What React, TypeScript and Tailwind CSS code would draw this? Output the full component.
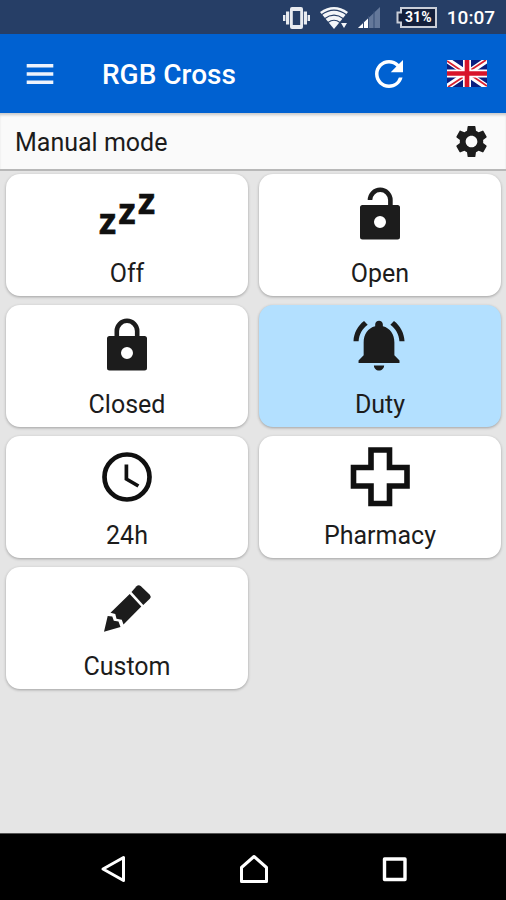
import { useState, type ReactNode } from 'react'
import { MdRefresh, MdSettings } from 'react-icons/md'

function ModeIcon({ children }: { children: ReactNode }) {
  return (
    <svg className="w-[60px] h-[60px] overflow-visible" viewBox="0 0 60 60" fill="#1c1c1c" aria-hidden="true">
      {children}
    </svg>
  )
}

const padlockBody =
  'M12.5 20h35a2.5 2.5 0 0 1 2.5 2.5v29.500a2.500 2.500 0 0 1-2.500 2.500h-35a2.500 2.500 0 0 1-2.500-2.500V22.500A2.500 2.500 0 0 1 12.500 20zM30 31a6 6 0 1 0 0 12a6 6 0 0 0 0-12z'

const modes = [
  {
    id: 'off',
    label: 'Off',
    icon: (
      <g
        className="font-['Open_Sans',sans-serif] font-bold text-[35px]"
        fill="#101010"
        stroke="#101010"
        strokeWidth=".7"
        textAnchor="middle"
      >
        <text x="10.500" y="49">z</text>
        <text x="30" y="39">z</text>
        <text x="49.500" y="29">z</text>
      </g>
    ),
  },
  {
    id: 'open',
    label: 'Open',
    icon: (
      <>
        <path d={padlockBody} fillRule="evenodd" />
        <path d="M20 15a10.200 10.200 0 0 1 20.400 0v6" fill="none" stroke="#1c1c1c" strokeWidth="4.600" />
      </>
    ),
  },
  {
    id: 'closed',
    label: 'Closed',
    icon: (
      <>
        <path d={padlockBody} fillRule="evenodd" />
        <path d="M19.800 21v-6a10.200 10.200 0 0 1 20.400 0v6" fill="none" stroke="#1c1c1c" strokeWidth="4.600" />
      </>
    ),
  },
  {
    id: 'duty',
    label: 'Duty',
    icon: (
      <path
        transform="translate(-1.7 -1.7) scale(2.56)"
        d="M7.580 4.080 6.150 2.650C3.750 4.480 2.170 7.300 2.030 10.500h2c.15-2.65 1.51-4.97 3.55-6.42zm12.390 6.420h2c-.15-3.2-1.73-6.02-4.12-7.85l-1.42 1.430c2.020 1.450 3.390 3.770 3.540 6.420zM18 11c0-3.070-1.640-5.640-4.500-6.320V4c0-.83-.67-1.5-1.5-1.5s-1.500.67-1.500 1.500v.68C7.630 5.360 6 7.920 6 11v5l-2 2v1h16v-1l-2-2v-5zm-6 11c1.100 0 2-.9 2-2h-4c0 1.100.9 2 2 2z"
      />
    ),
  },
  {
    id: '24h',
    label: '24h',
    icon: (
      <g fill="none" stroke="#101010">
        <circle cx="30" cy="30" r="22.500" strokeWidth="4.700" />
        <path d="M29.400 17.500V32l12 7" strokeWidth="3.700" />
      </g>
    ),
  },
  {
    id: 'pharmacy',
    label: 'Pharmacy',
    icon: (
      <path
        d="M21 3h18.500v17.500H57V39H39.500v17.500H21V39H3.500V20.500H21z"
        fill="none"
        stroke="#101010"
        strokeWidth="5.600"
      />
    ),
  },
  {
    id: 'custom',
    label: 'Custom',
    icon: (
      <>
        <path d="M39.500 8.200Q41.500 6.300 43.700 8L52.800 16.700Q54.600 18.700 52.800 20.700L46.300 27 34.500 14z" />
        <path d="M32.700 16 44.300 28.400 26.500 46.500 24.800 41.700 19.500 40.700 18.300 36 13.500 34.700z" />
        <path d="M10.700 38 15.300 38.500 16.800 42.700 21.500 43.600 23.500 49 7 53.700z" />
      </>
    ),
  },
]

function StatusBar() {
  return (
    <div className="h-[34px] bg-[#263e66] flex items-center justify-end gap-[10px] pt-px pr-[11px] text-white">
      {/* vibrate */}
      <svg className="w-[27px] h-[22px]" viewBox="0 0 27 22" fill="#e8ebf0" aria-hidden="true">
        <path d="M0 8h2.400v6H0zM3 4.500h3.200v13H3zM20.800 4.500h3.200v13h-3.200zM24.600 8H27v6h-2.400z" />
        <path d="M9 0h9a2 2 0 0 1 2 2v18a2 2 0 0 1-2 2H9a2 2 0 0 1-2-2V2a2 2 0 0 1 2-2zm.8 4v14h7.400V4z" fillRule="evenodd" />
      </svg>
      {/* wifi */}
      <svg className="w-[28px] h-[22px]" viewBox="0 0 28 22" aria-hidden="true">
        <path d="M0 5Q14-5 28 5L14 22z" fill="#f4f6f9" />
        <path d="M1.500 7.800Q14-1.500 26.500 7.800M4.500 11.700Q14 4.600 23.500 11.700M8 15.500Q14 11 20 15.500" fill="none" stroke="#263e66" strokeWidth="1.200" />
        <path d="M20 15h8v7h-8z" fill="#263e66" />
        <path d="M21 16h6l-3 5z" fill="#f4f6f9" />
      </svg>
      {/* signal */}
      <svg className="w-[22px] h-[21px]" viewBox="0 0 22 21" aria-hidden="true">
        <path d="M0 21 22 0v21z" fill="#64789a" />
        <path d="M0 21 10 11.500V21z" fill="#fff" />
        <path d="M5.500 14v7M10.500 9v12M16 4v17" stroke="#354d75" strokeWidth="1" />
      </svg>
      <div className="relative ml-[6px] w-[41px] h-[21px]">
        <svg className="w-[41px] h-[21px]" viewBox="0 0 41 21" aria-hidden="true">
          <path d="M5 1h35v19H5v-4.500H1.500v-10H5z" fill="#14203c" stroke="#c9ced8" strokeWidth="2" />
        </svg>
        <span className="absolute inset-0 pl-1 text-center text-[14px] leading-[21px] font-bold">31%</span>
      </div>
      <span className="text-[19px] leading-[24px] font-medium">10:07</span>
    </div>
  )
}

function BritishFlag() {
  return (
    <svg className="w-[40px] h-[27px]" viewBox="0 0 40 27" aria-hidden="true">
      <path d="M0 0h40v27H0z" fill="#0a1f80" />
      <path d="M0 0 40 27M40 0 0 27" stroke="#fff" strokeWidth="6" />
      <path d="M0 1 20 14.500M40 26 20 12.500M39 0 20 12.500M1 27 20 14.500" stroke="#d8202f" strokeWidth="1.800" />
      <path d="M20 0v27M0 13.500h40" stroke="#fff" strokeWidth="8" />
      <path d="M20 0v27M0 13.500h40" stroke="#d8142a" strokeWidth="4.600" />
    </svg>
  )
}

export default function App() {
  const [active, setActive] = useState('duty')

  return (
    <div className="min-h-screen flex flex-col bg-[#e5e5e5] font-['Roboto',sans-serif] text-[#1c1c1c]">
      <StatusBar />

      {/* App bar */}
      <header className="h-[79px] bg-[#0061d1] text-white flex items-center pl-[26px] pr-[19px]">
        <button type="button" aria-label="Menu">
          <svg className="w-[28px] h-[20px]" viewBox="0 0 28 20" fill="#eef3fc">
            <path d="M.7 0h26.600v3.600H.7zM.7 8.200h26.600v3.600H.7zM.7 16.400h26.600V20H.7z" />
          </svg>
        </button>
        <h1 className="ml-[48px] pt-[3px] flex-1 text-[28px] leading-[32px] font-medium">RGB Cross</h1>
        <button type="button" aria-label="Refresh" className="mr-[37px]">
          <MdRefresh className="w-[42px] h-[42px]" />
        </button>
        <button type="button" aria-label="Language">
          <BritishFlag />
        </button>
      </header>

      <div className="h-[58px] bg-[#fafafa] border-b-2 border-[#b8b8b8] flex items-center justify-between pt-px px-[15px] shadow-[inset_0_3px_3px_-1px_rgba(0,0,0,0.2)]">
        <h2 className="pt-[2px] text-[25px] leading-[32px]">Manual mode</h2>
        <button type="button" aria-label="Settings">
          <MdSettings className="w-[39px] h-[39px]" />
        </button>
      </div>

      {/* Modes */}
      <main className="flex-1 grid grid-cols-2 content-start gap-x-[11px] gap-y-[9px] pt-[3px] pl-[6px] pr-[5px]">
        {modes.map((mode) => (
          <button
            key={mode.id}
            type="button"
            aria-pressed={active === mode.id}
            onClick={() => setActive(mode.id)}
            className={`flex flex-col items-center gap-[13px] pt-[11px] pb-[6px] rounded-[14px] shadow-[0_1px_3px_rgba(0,0,0,0.3)] ${
              active === mode.id ? 'bg-[#b3e0ff]' : 'bg-white'
            }`}
          >
            <ModeIcon>{mode.icon}</ModeIcon>
            <span className="text-[25px] leading-[32px]">{mode.label}</span>
          </button>
        ))}
      </main>

      {/* Navigation bar */}
      <nav className="h-[67px] bg-black border-t border-[#555] grid grid-cols-3 items-center justify-items-center pl-[43px] pr-[41px] pt-[3px]">
        <button type="button" aria-label="Back">
          <svg className="w-[32px] h-[32px]" viewBox="0 0 32 32" fill="none" stroke="#fff" strokeWidth="3">
            <path d="M26.500 4.500v23L6 16z" strokeLinejoin="round" />
          </svg>
        </button>
        <button type="button" aria-label="Home">
          <svg className="w-[32px] h-[32px]" viewBox="0 0 32 32" fill="none" stroke="#fff" strokeWidth="3">
            <path d="M16 3.500 28.500 14.500v14h-25v-14z" strokeLinejoin="round" />
          </svg>
        </button>
        <button type="button" aria-label="Recent apps">
          <svg className="w-[32px] h-[32px]" viewBox="0 0 32 32" fill="none" stroke="#fff" strokeWidth="3.400">
            <path d="M5.500 6h20.500v20.500H5.500z" strokeLinejoin="round" />
          </svg>
        </button>
      </nav>
    </div>
  )
}
